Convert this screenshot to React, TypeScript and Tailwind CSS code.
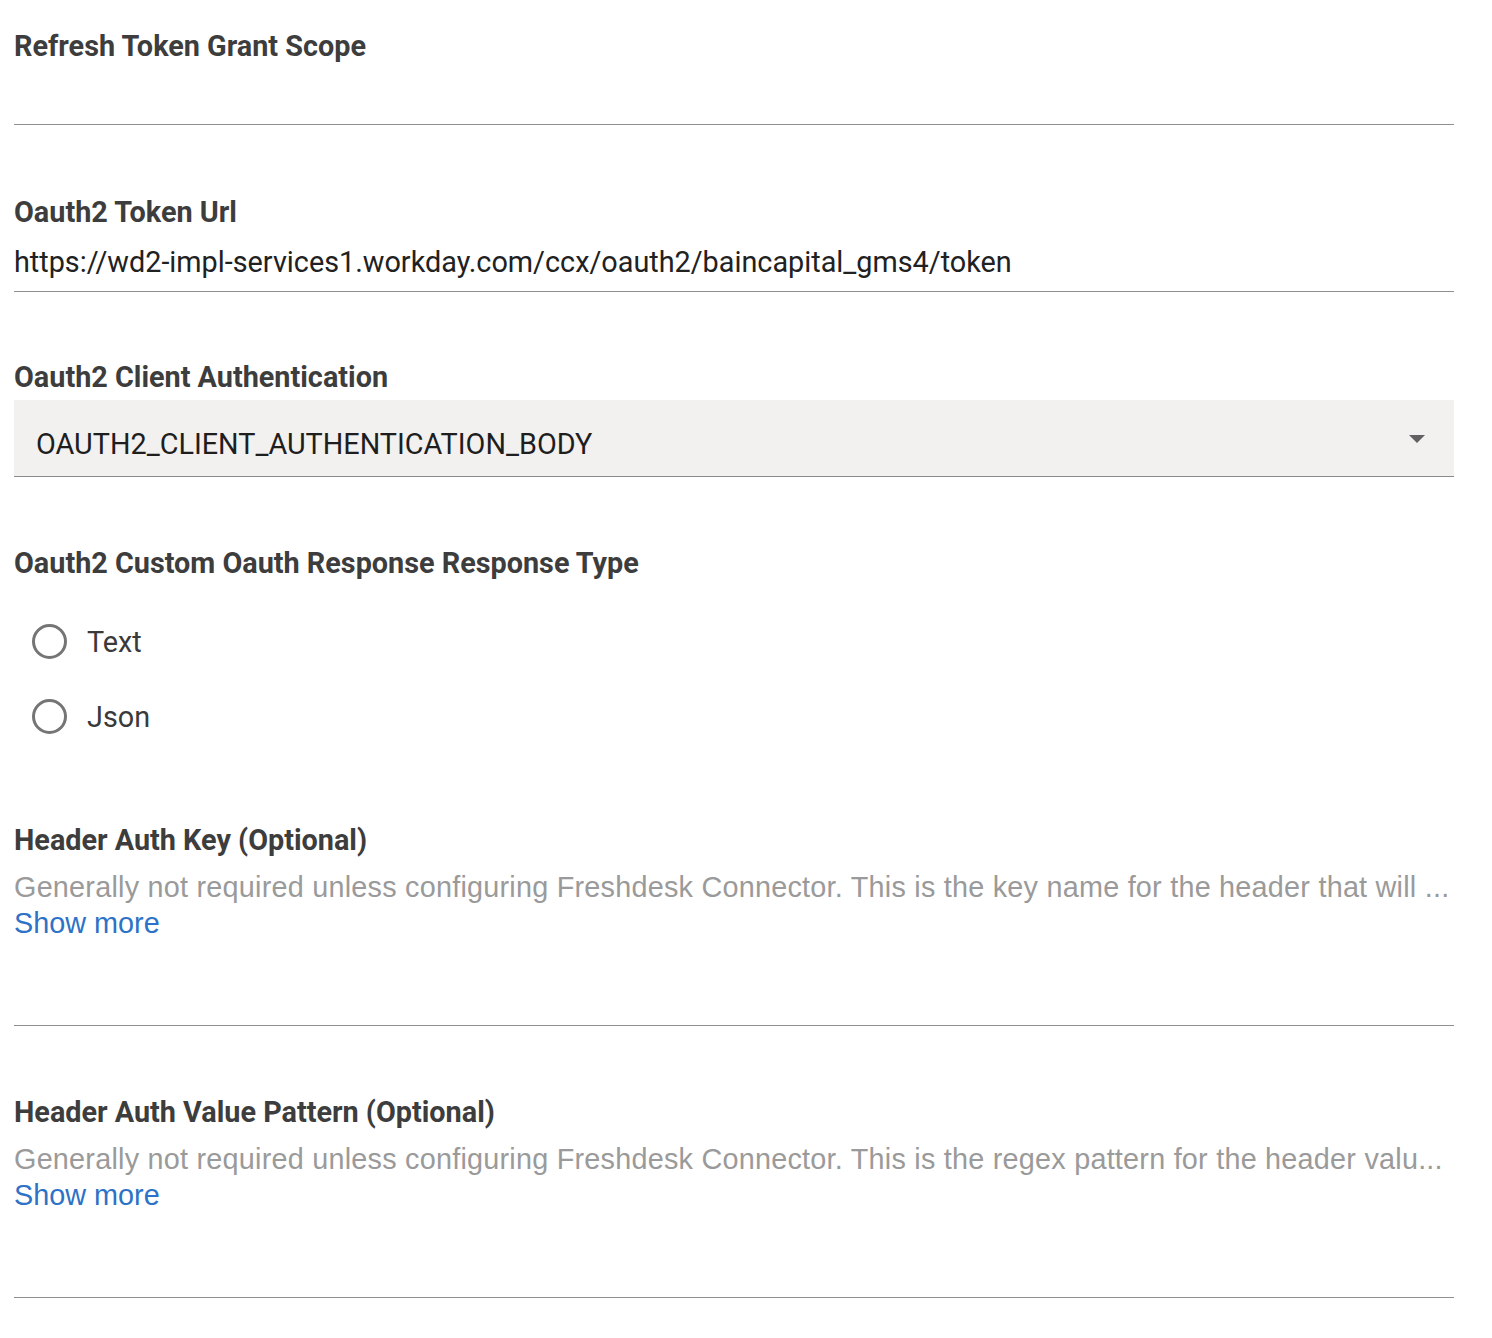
const labelCls = "block text-[28.8px] leading-[32px] font-bold text-[#3d3d3d] font-['Roboto',sans-serif]";
const descCls = "overflow-hidden whitespace-nowrap text-[28.8px] leading-[36px] tracking-[0.23px] text-[#9a9a9a] font-['Liberation_Sans',Arial,sans-serif]";
const linkCls = "text-[28.8px] leading-[36px] text-[#2d72c6] font-['Liberation_Sans',Arial,sans-serif]";

function Radio({ label }: { label: string }) {
    return (
        <label className="flex h-[75px] items-center pl-[18px]">
            <span className="h-[35px] w-[35px] rounded-full border-[3px] border-[#757575]" />
            <span className="ml-[20px] text-[28.8px] leading-[32px] text-[#3a3a3a] font-['Roboto',sans-serif]">{label}</span>
        </label>
    );
}

function OptionalField({ title, desc }: { title: string; desc: string }) {
    return (
        <section className="pt-[70px]">
            <span className={labelCls}>{title}</span>
            <div className="mt-[13px] pb-[84px] border-b border-[#8f8f8f]">
                <p className={descCls}>{desc}</p>
                <a className={linkCls}>Show more</a>
            </div>
        </section>
    );
}

export default function App() {
    return (
        <div className="min-h-[1338px] bg-white">
            <div className="ml-[14px] w-[1440px]">
                <section className="pt-[30px]">
                    <span className={labelCls}>Refresh Token Grant Scope</span>
                    <div className="h-[63px] border-b border-[#8f8f8f]" />
                </section>

                <section className="pt-[71px]">
                    <span className={labelCls}>Oauth2 Token Url</span>
                    <div className="pt-[18px] pb-[13px] border-b border-[#8f8f8f]">
                        <span className="block text-[28.8px] leading-[32px] text-[#212121] font-['Roboto',sans-serif]">
                            https://wd2-impl-services1.workday.com/ccx/oauth2/baincapital_gms4/token
                        </span>
                    </div>
                </section>

                <section className="pt-[69px]">
                    <span className={labelCls}>Oauth2 Client Authentication</span>
                    <div className="mt-[7px] flex h-[77px] items-center justify-between bg-[#f2f1f0] border-b border-[#8a8a8a] pl-[22px] pr-[29px] pt-[12px]">
                        <span className="text-[28.8px] leading-[32px] text-[#1e1e1e] font-['Roboto',sans-serif]">
                            OAUTH2_CLIENT_AUTHENTICATION_BODY
                        </span>
                        <svg width="16" height="8" viewBox="0 0 16 8" className="-mt-[10px]">
                            <path d="M0 0 L16 0 L8 8 Z" fill="#616161" />
                        </svg>
                    </div>
                </section>

                <section className="pt-[70px]">
                    <span className={labelCls}>Oauth2 Custom Oauth Response Response Type</span>
                    <div className="mt-[25px]">
                        <Radio label="Text" />
                        <Radio label="Json" />
                    </div>
                </section>

                <OptionalField
                    title="Header Auth Key (Optional)"
                    desc="Generally not required unless configuring Freshdesk Connector. This is the key name for the header that will ..."
                />
                <OptionalField
                    title="Header Auth Value Pattern (Optional)"
                    desc="Generally not required unless configuring Freshdesk Connector. This is the regex pattern for the header valu..."
                />
            </div>
        </div>
    );
}
